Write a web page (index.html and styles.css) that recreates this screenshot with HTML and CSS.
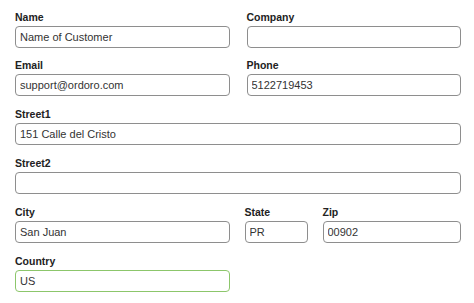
FILE: index.html
```html
<!DOCTYPE html>
<html>
<head>
<meta charset="utf-8">
<link rel="stylesheet" href="styles.css">
</head>
<body>
<form class="form">
  <div class="row two">
    <div class="field"><label class="label">Name</label><input class="input" value="Name of Customer"></div>
    <div class="field"><label class="label">Company</label><input class="input" value=""></div>
  </div>
  <div class="row two">
    <div class="field"><label class="label">Email</label><input class="input" value="support@ordoro.com"></div>
    <div class="field"><label class="label">Phone</label><input class="input" value="5122719453"></div>
  </div>
  <div class="row one">
    <div class="field"><label class="label">Street1</label><input class="input" value="151 Calle del Cristo"></div>
  </div>
  <div class="row one">
    <div class="field"><label class="label">Street2</label><input class="input" value=""></div>
  </div>
  <div class="row three">
    <div class="field"><label class="label">City</label><input class="input" value="San Juan"></div>
    <div class="field"><label class="label">State</label><input class="input" value="PR"></div>
    <div class="field"><label class="label">Zip</label><input class="input" value="00902"></div>
  </div>
  <div class="row two">
    <div class="field"><label class="label">Country</label><input class="input valid" value="US"></div>
  </div>
</form>
</body>
</html>
```

FILE: styles.css
```css
html, body {
  margin: 0;
  padding: 0;
  background: #ffffff;
}
body {
  font-family: "Liberation Sans", Arial, sans-serif;
  color: #222;
}
.form {
  width: 446px;
  padding: 10.6px 0 0 15px;
  display: flex;
  flex-direction: column;
  gap: 11.8px;
}
.row {
  display: grid;
  column-gap: 17px;
}
.row.two {
  grid-template-columns: 214.5px 214.5px;
}
.row.one {
  grid-template-columns: 1fr;
}
.row.three {
  grid-template-columns: 214.5px 63px 1fr;
  column-gap: 15px;
}
.field {
  display: flex;
  flex-direction: column;
}
.label {
  font-size: 10.5px;
  line-height: 13px;
  font-weight: bold;
  color: #222;
  margin-bottom: 2px;
}
.input {
  box-sizing: border-box;
  width: 100%;
  height: 22px;
  margin: 0;
  padding: 0 4px;
  border: 1px solid #8e8e8e;
  border-radius: 4px;
  font-family: "Liberation Sans", Arial, sans-serif;
  font-size: 11px;
  color: #333;
  background: #fff;
  outline: none;
}
.input.valid {
  border-color: #8cc66b;
}
```
